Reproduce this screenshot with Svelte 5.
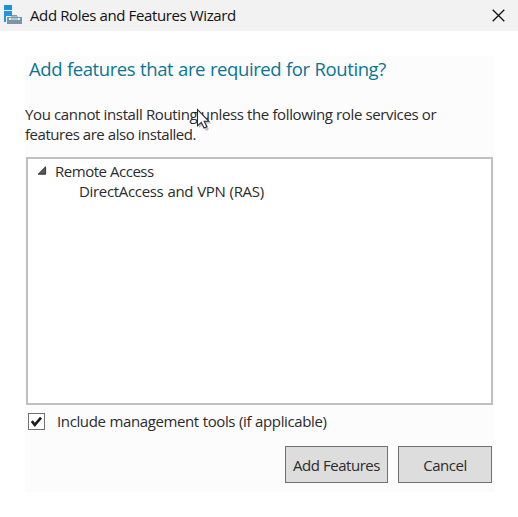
<script>
  const lines = [
    'You cannot install Routing unless the following role services or',
    'features are also installed.'
  ];
  let checked = $state(true);
</script>

<div class="window">
  <header class="titlebar">
    <svg class="app-icon" width="20" height="21" viewBox="0 0 20 21" shape-rendering="crispEdges">
      <rect x="1" y="1" width="8" height="5" fill="#1f8fd8" />
      <rect x="1" y="7" width="8" height="11" fill="#2494dc" />
      <rect x="3" y="12" width="17" height="9" fill="#f2f2f2" />
      <rect x="9" y="11" width="5" height="1" fill="#7f9aa8" />
      <rect x="8" y="12" width="7" height="1" fill="#a9bdc8" />
      <rect x="4" y="13" width="15" height="7" fill="#7896a8" />
      <rect x="6" y="14" width="11" height="2" fill="#b4c6d0" />
      <rect x="6" y="14" width="2" height="2" fill="#e8eff3" />
      <rect x="15" y="14" width="2" height="2" fill="#e8eff3" />
    </svg>
    <span class="title">Add Roles and Features Wizard</span>
    <svg class="close" width="13" height="13" viewBox="0 0 13 13">
      <path d="M.7.7 12.3 12.3M12.3.7.7 12.3" stroke="#111" stroke-width="1.3" />
    </svg>
  </header>

  <main class="panel">
    <h1>Add features that are required for Routing?</h1>
    <div class="message">
      <p class="l1">{lines[0]}</p>
      <p class="l2">{lines[1]}</p>
    </div>
    <div class="tree">
      <div class="parent">
        <svg width="10" height="10" viewBox="0 0 10 10">
          <path d="M8.6.8V8.2H1.2Z" fill="#595959" stroke="#333" />
        </svg>
        <span>Remote Access</span>
      </div>
      <div class="child"><span>DirectAccess and VPN (RAS)</span></div>
    </div>
    <div class="option">
      <button class="box" aria-label="Include management tools" onclick={() => (checked = !checked)}>
        {#if checked}
          <svg width="15" height="15" viewBox="0 0 15 15">
            <path d="M2.8 7.2 5.8 10.9 12 3.6" fill="none" stroke="#1e1e1e" stroke-width="2.7" />
          </svg>
        {/if}
      </button>
      <span class="label">Include management tools (if applicable)</span>
    </div>
    <div class="actions">
      <button class="add"><span>Add Features</span></button>
      <button class="cancel"><span>Cancel</span></button>
    </div>
  </main>

  <svg class="cursor" width="20" height="26" viewBox="0 0 20 26">
    <path d="M2 2V19L6 15.5L9 22L12 20.5L9.2 14.5H14.5Z" fill="#666" opacity=".4" transform="translate(2 1)" />
    <path d="M2.5 1.7V17.8L6.3 14.4L9.1 20.1L11.9 18.8L9.2 13.2H13.8Z" fill="#fff" stroke="#252a36" stroke-width="1.1" />
  </svg>
</div>

<style>
  :global(body) { margin: 0; background: #fff; }
  .window {
    position: relative;
    width: 518px;
    height: 517px;
    overflow: hidden;
    background: #fff;
    font: 15px/20px "Open Sans", "Noto Sans", sans-serif;
    color: #2b2b2b;
    white-space: nowrap;
  }
  .titlebar {
    display: flex;
    align-items: center;
    box-sizing: border-box;
    height: 31px;
    padding: 0 13px 0 3px;
    background: #f2f2f2;
  }
  .app-icon { margin-top: -2px; }
  .title { margin: -2px 0 0 7px; color: #111; letter-spacing: -0.38px; }
  .close { margin-left: auto; margin-top: -1px; }
  .panel {
    box-sizing: border-box;
    width: 469px;
    height: 436px;
    margin: 25px 0 0 25px;
    background: #fcfcfc;
    display: flex;
    flex-direction: column;
  }
  h1 {
    margin: 0;
    padding: 1px 0 0 4px;
    height: 48px;
    box-sizing: border-box;
    font-size: 18.5px;
    line-height: 24px;
    font-weight: 400;
    letter-spacing: -0.42px;
    word-spacing: 0.5px;
    color: #0b7595;
  }
  .message { height: 53px; }
  p { margin: 0; letter-spacing: -0.37px; }
  .l2 { letter-spacing: -0.46px; }
  .tree {
    box-sizing: border-box;
    width: 467px;
    height: 248px;
    margin-left: 1px;
    padding-top: 2px;
    border: 2px solid #c0c0c0;
    background: #fff;
  }
  .parent { display: flex; align-items: center; padding-left: 9px; gap: 8px; letter-spacing: -0.47px; }
  .child { padding-left: 51px; letter-spacing: -0.33px; word-spacing: 0.5px; }
  .option { display: flex; align-items: center; gap: 12px; height: 17px; margin: 8px 0 0 3px; letter-spacing: -0.38px; word-spacing: 0.4px; }
  .label { margin-top: -2px; }
  button {
    box-sizing: border-box;
    font: inherit;
    color: inherit;
    letter-spacing: -0.45px;
    padding: 0;
    border: 1px solid #707070;
    background: #ddd;
  }
  .box { width: 17px; height: 17px; background: #fff; }
  .box svg { display: block; }
  .actions { display: flex; gap: 10px; margin: 16px 0 0 260px; }
  .actions button { height: 37px; }
  .add { width: 103px; }
  .cancel { width: 94px; }
  .cursor { position: absolute; left: 195px; top: 108px; }
</style>
